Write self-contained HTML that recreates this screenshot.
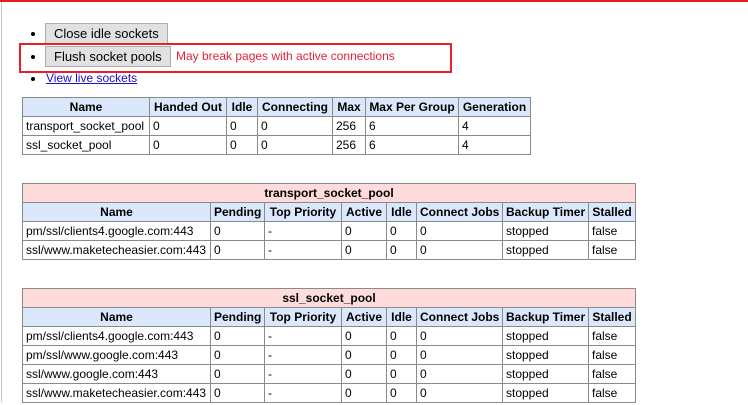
<!DOCTYPE html>
<html><head><style>
body{margin:0;width:748px;height:405px;background:#fff;position:relative;overflow:hidden;font-family:"Liberation Sans",sans-serif;font-size:12px;color:#000}
.topbar{position:absolute;left:0;top:0;width:748px;height:2px;background:#e02020}
.lbar{position:absolute;left:1px;top:2px;width:1px;height:400px;background:#c8c8c8}
.btn{position:absolute;height:19px;border:1px solid #adadad;background:#e1e1e1;font-size:13px;line-height:19px;padding:0 8px;box-sizing:content-box}
.dot{position:absolute;left:31px;width:4px;height:4px;border-radius:2px;background:#000}
table{position:absolute;border-collapse:collapse;table-layout:fixed}
td,th{border:1px solid #8a8a8a;padding:0 3px;white-space:nowrap;overflow:hidden;height:18px;line-height:17px;text-align:left}
th{background:#dbe8fb;text-align:center;font-weight:bold}
th.t{background:#fedcdc}
</style></head><body>
<div class="topbar"></div><div class="lbar"></div>
<div class="dot" style="top:32px"></div>
<div class="btn" style="left:45px;top:23px">Close idle sockets</div>
<div class="dot" style="top:55px"></div>
<div class="btn" style="left:45px;top:46px">Flush socket pools</div>
<div style="position:absolute;left:176px;top:49px;color:#e8203a;font-size:12px">May break pages with active connections</div>
<div style="position:absolute;left:19px;top:43px;width:429px;height:26px;border:2px solid #e8202a"></div>
<div class="dot" style="top:77px"></div>
<div style="position:absolute;left:46px;top:71px;color:#1a0dcc;text-decoration:underline;font-size:12px">View live sockets</div>

<table style="left:22px;top:97px;width:508px">
<colgroup><col style="width:127px"><col style="width:77px"><col style="width:31px"><col style="width:75px"><col style="width:33px"><col style="width:93px"><col style="width:72px"></colgroup>
<tr><th>Name</th><th>Handed Out</th><th>Idle</th><th>Connecting</th><th>Max</th><th>Max Per Group</th><th>Generation</th></tr>
<tr><td>transport_socket_pool</td><td>0</td><td>0</td><td>0</td><td>256</td><td>6</td><td>4</td></tr>
<tr><td>ssl_socket_pool</td><td>0</td><td>0</td><td>0</td><td>256</td><td>6</td><td>4</td></tr>
</table>

<table style="left:22px;top:183px;width:613px">
<colgroup><col style="width:188px"><col style="width:54px"><col style="width:77px"><col style="width:45px"><col style="width:30px"><col style="width:86px"><col style="width:86px"><col style="width:47px"></colgroup>
<tr><th class="t" colspan="8">transport_socket_pool</th></tr>
<tr><th>Name</th><th>Pending</th><th>Top Priority</th><th>Active</th><th>Idle</th><th>Connect Jobs</th><th>Backup Timer</th><th>Stalled</th></tr>
<tr><td>pm/ssl/clients4.google.com:443</td><td>0</td><td>-</td><td>0</td><td>0</td><td>0</td><td>stopped</td><td>false</td></tr>
<tr><td>ssl/www.maketecheasier.com:443</td><td>0</td><td>-</td><td>0</td><td>0</td><td>0</td><td>stopped</td><td>false</td></tr>
</table>

<table style="left:22px;top:288px;width:613px">
<colgroup><col style="width:188px"><col style="width:54px"><col style="width:77px"><col style="width:45px"><col style="width:30px"><col style="width:86px"><col style="width:86px"><col style="width:47px"></colgroup>
<tr><th class="t" colspan="8">ssl_socket_pool</th></tr>
<tr><th>Name</th><th>Pending</th><th>Top Priority</th><th>Active</th><th>Idle</th><th>Connect Jobs</th><th>Backup Timer</th><th>Stalled</th></tr>
<tr><td>pm/ssl/clients4.google.com:443</td><td>0</td><td>-</td><td>0</td><td>0</td><td>0</td><td>stopped</td><td>false</td></tr>
<tr><td>pm/ssl/www.google.com:443</td><td>0</td><td>-</td><td>0</td><td>0</td><td>0</td><td>stopped</td><td>false</td></tr>
<tr><td>ssl/www.google.com:443</td><td>0</td><td>-</td><td>0</td><td>0</td><td>0</td><td>stopped</td><td>false</td></tr>
<tr><td>ssl/www.maketecheasier.com:443</td><td>0</td><td>-</td><td>0</td><td>0</td><td>0</td><td>stopped</td><td>false</td></tr>
</table>
</body></html>
